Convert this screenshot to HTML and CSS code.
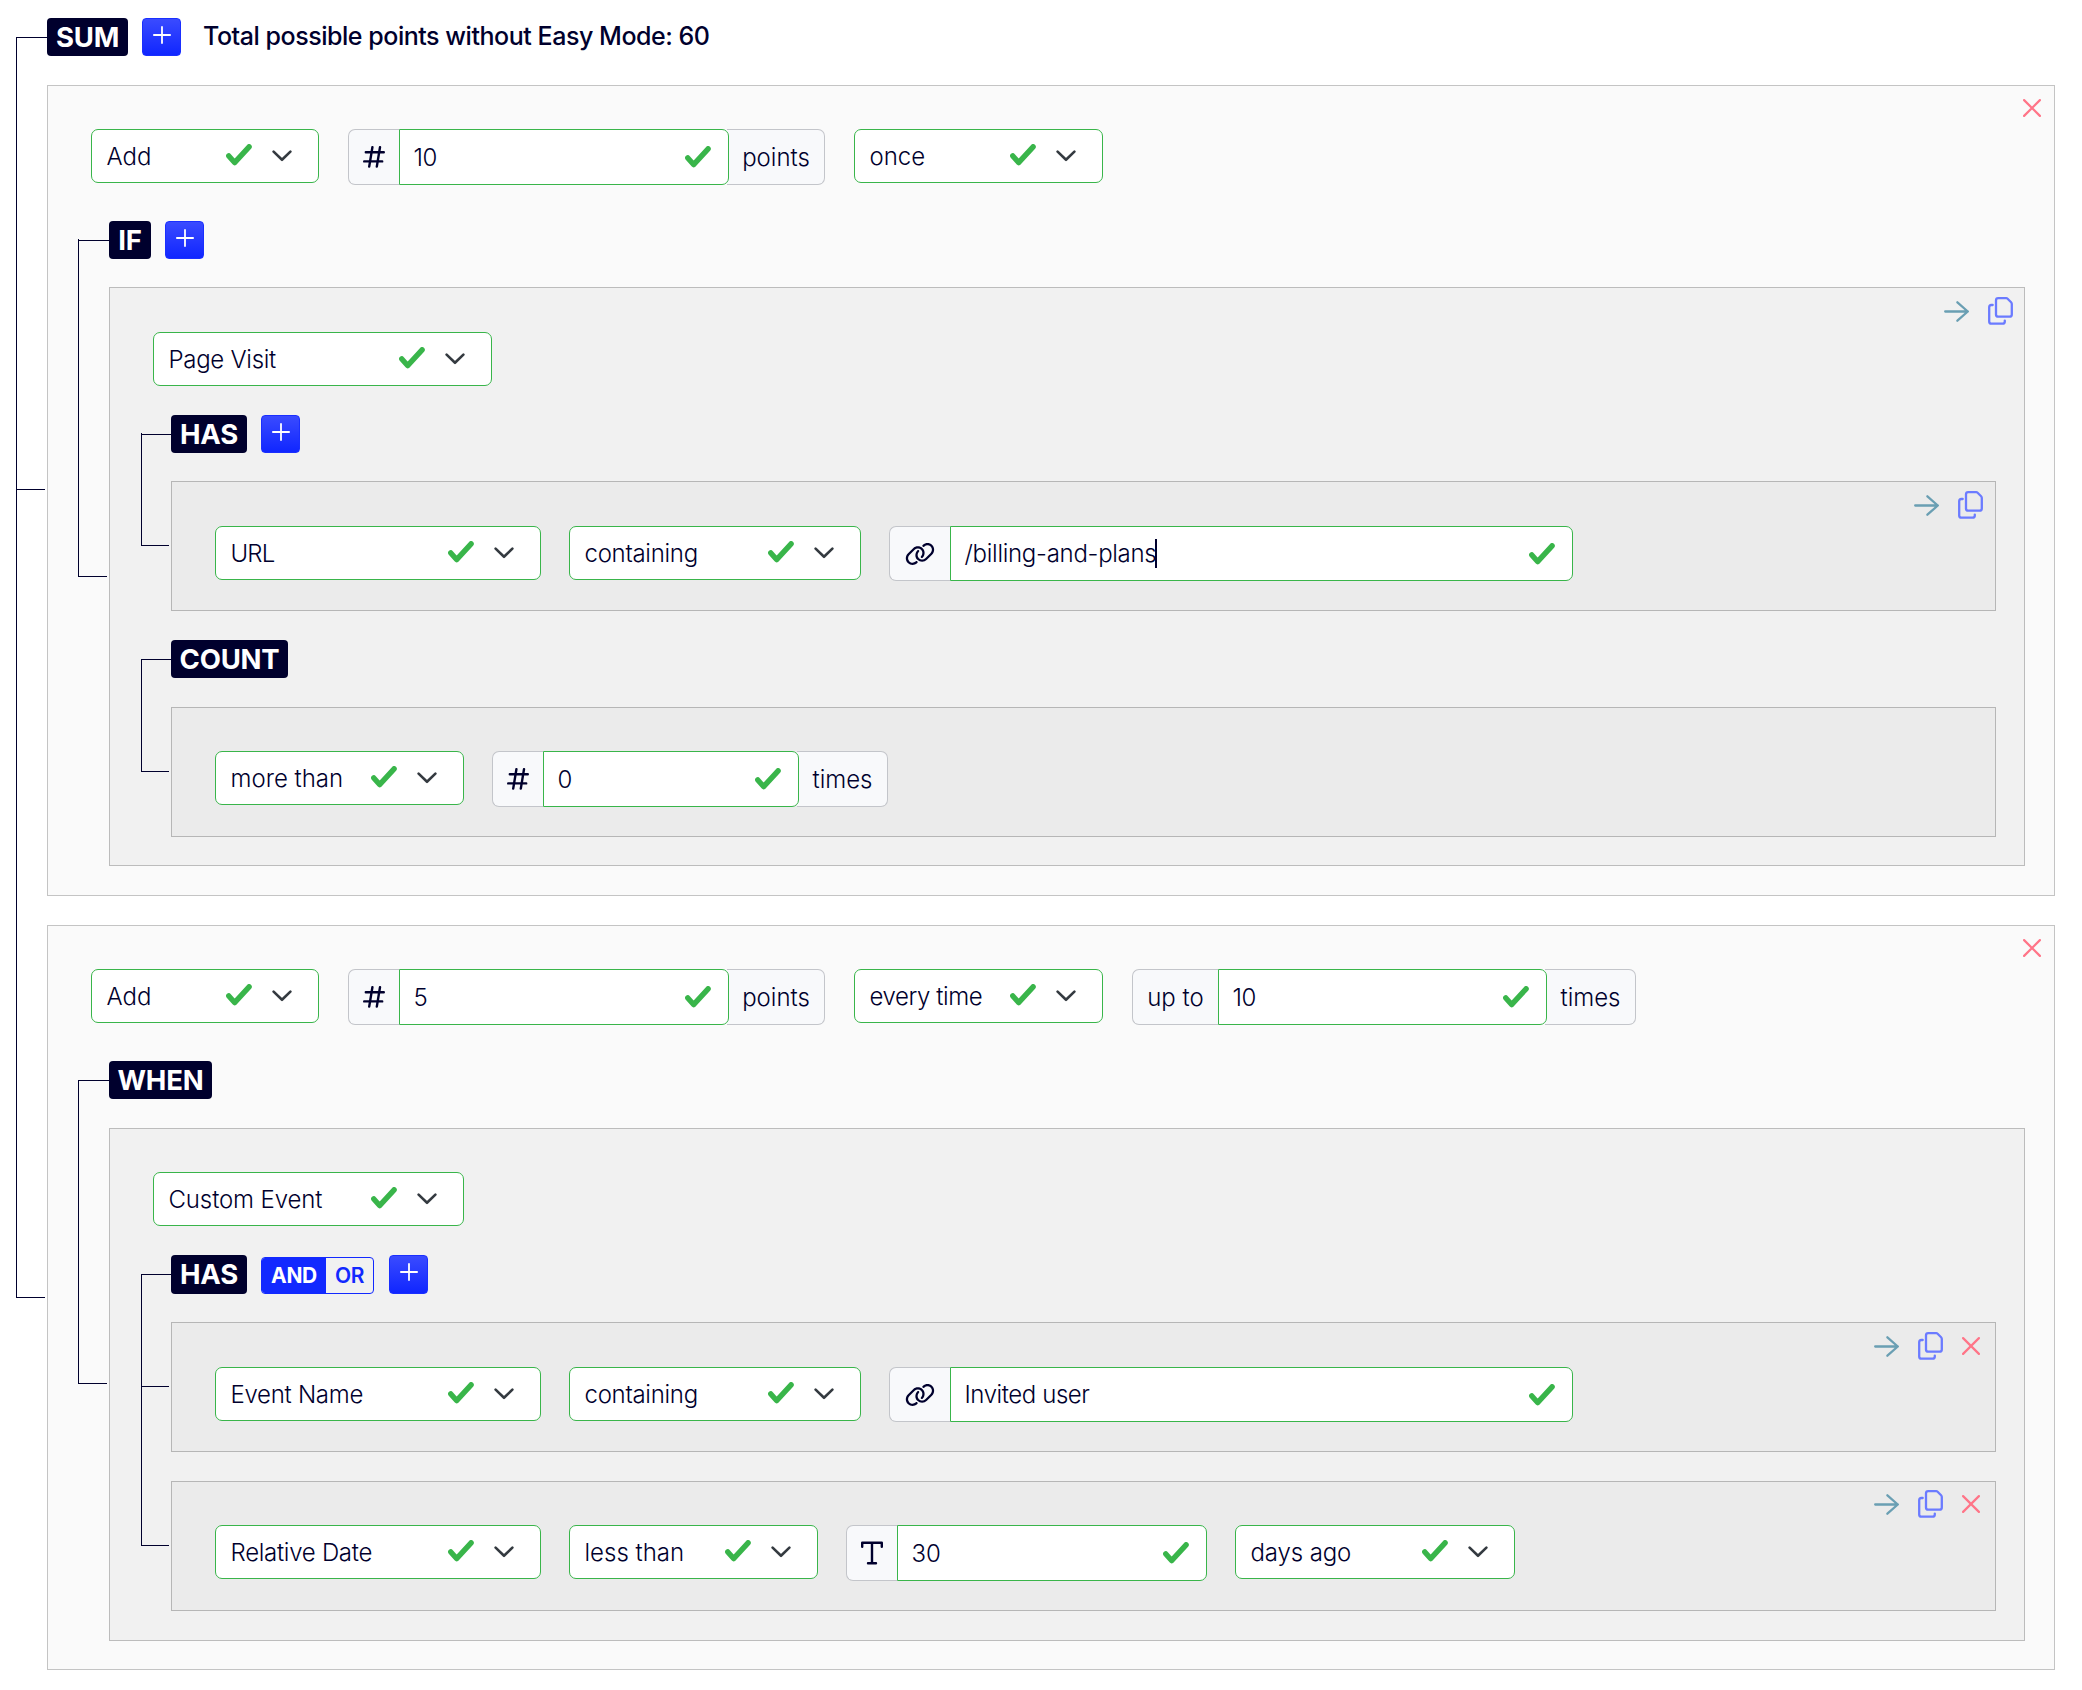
FILE: index.html
```html
<!DOCTYPE html>
<html lang="en">
<head>
<meta charset="utf-8">
<title>Scoring rules</title>
<link rel="stylesheet" href="styles.css">
</head>
<body>
<svg class="defs" aria-hidden="true">
  <symbol id="check" viewBox="0 0 26 22"><path d="M2.8 11.9 8.6 18.6 23.1 2.8" fill="none" stroke="currentColor" stroke-width="5.4" stroke-linecap="round" stroke-linejoin="round"/></symbol>
  <symbol id="chevron" viewBox="0 0 20 12"><path d="M1.6 1.6 10 9.8 18.4 1.6" fill="none" stroke="currentColor" stroke-width="2.6" stroke-linecap="round" stroke-linejoin="round"/></symbol>
  <symbol id="plus" viewBox="0 0 18 18"><path d="M9 .9V17.1M.9 9H17.1" fill="none" stroke="currentColor" stroke-width="1.8" stroke-linecap="round"/></symbol>
  <symbol id="hash" viewBox="0 0 22 22"><path d="M9.4 1.2 6.2 20.6M17 1.2 13.8 20.6M2.8 6.2H20.8M1.2 15.4H19.2" fill="none" stroke="currentColor" stroke-width="2.4" stroke-linecap="round"/></symbol>
  <symbol id="type" viewBox="0 0 22 24"><path d="M1.2 5.8V1.8H20.8V5.8M11 1.8V22.2M7 22.2H15" fill="none" stroke="currentColor" stroke-width="2.4" stroke-linecap="round" stroke-linejoin="round"/></symbol>
  <symbol id="link" viewBox="0 0 640 512"><path fill="currentColor" d="M580.3 267.2c56.2-56.2 56.2-147.3 0-203.5C526.8 10.2 440.9 7.3 383.9 57.2l-6.1 5.4c-10 8.7-11 23.9-2.3 33.9s23.9 11 33.9 2.3l6.1-5.4c38-33.2 95.2-31.3 130.9 4.4c37.4 37.4 37.4 98.1 0 135.6L433.1 346.6c-37.4 37.4-98.2 37.4-135.6 0c-35.7-35.7-37.6-92.9-4.4-130.9l4.7-5.4c8.7-10 7.7-25.1-2.3-33.9s-25.1-7.7-33.9 2.3l-4.7 5.4c-49.8 57-46.9 142.9 6.6 196.4c56.2 56.2 147.3 56.2 203.5 0L580.3 267.2zM59.7 244.8C3.5 301 3.5 392.1 59.7 448.2c53.6 53.6 139.5 56.4 196.5 6.5l6.1-5.4c10-8.7 11-23.9 2.3-33.9s-23.9-11-33.9-2.3l-6.1 5.4c-38 33.2-95.2 31.3-130.9-4.4c-37.4-37.4-37.4-98.1 0-135.6L207 165.4c37.4-37.4 98.1-37.4 135.6 0c35.7 35.7 37.6 92.9 4.4 130.9l-5.4 6.1c-8.7 10-7.7 25.1 2.3 33.9s25.1 7.7 33.9-2.3l5.4-6.1c49.9-57 47-142.9-6.5-196.5c-56.2-56.2-147.3-56.2-203.5 0L59.7 244.8z"/></symbol>
  <symbol id="arrow" viewBox="0 0 25 21"><path d="M1.2 10.5H23.8M13.4 1.3 23.8 10.5 13.4 19.7" fill="none" stroke="currentColor" stroke-width="2.3" stroke-linecap="round" stroke-linejoin="round"/></symbol>
  <symbol id="copy" viewBox="0 0 25 28"><path d="M10.2 1.2H18.2Q19 1.2 19.6 1.8L23.1 5.2Q23.8 5.9 23.8 6.9V17.5Q23.8 19.7 21.6 19.7H10.2Q8 19.7 8 17.5V3.4Q8 1.2 10.2 1.2ZM4.7 8H3.3Q1.2 8 1.2 10.2V24.5Q1.2 26.7 3.3 26.7H14.6Q16.8 26.7 16.8 24.5V23.6" fill="none" stroke="currentColor" stroke-width="2.3" stroke-linecap="round" stroke-linejoin="round"/></symbol>
  <symbol id="cross" viewBox="0 0 18 18"><path d="M1.1 1.1 16.9 16.9M16.9 1.1 1.1 16.9" fill="none" stroke="currentColor" stroke-width="2.2" stroke-linecap="round"/></symbol>
</svg>

<main class="tree">
  <header class="head">
    <span class="badge w-sum">SUM</span>
    <button class="add"><svg><use href="#plus"/></svg></button>
    <h1 class="total">Total possible points without Easy Mode: 60</h1>
  </header>

  <div class="branch">
    <section class="card card-a high-tick">
      <div class="actions actions-root"><svg class="i-cross"><use href="#cross"/></svg></div>
      <div class="row">
        <div class="select w-228"><span>Add</span><svg class="i-check"><use href="#check"/></svg><svg class="i-chev"><use href="#chevron"/></svg></div>
        <div class="group">
          <span class="addon w-51"><svg class="i-hash"><use href="#hash"/></svg></span>
          <div class="input w-330"><span class="snugger">10</span><svg class="i-check"><use href="#check"/></svg></div>
          <span class="addon after w-98"><span>points</span></span>
        </div>
        <div class="select w-249"><span>once</span><svg class="i-check"><use href="#check"/></svg><svg class="i-chev"><use href="#chevron"/></svg></div>
      </div>
      <div class="sub">
        <header class="head">
          <span class="badge w-if">IF</span>
          <button class="add"><svg><use href="#plus"/></svg></button>
        </header>
        <div class="branch tight">
          <section class="card card-b low">
            <div class="actions"><svg class="i-arrow"><use href="#arrow"/></svg><svg class="i-copy"><use href="#copy"/></svg></div>
            <div class="row short">
              <div class="select w-339"><span class="close">Page Visit</span><svg class="i-check"><use href="#check"/></svg><svg class="i-chev"><use href="#chevron"/></svg></div>
            </div>
            <div class="sub">
              <header class="head">
                <span class="badge w-has">HAS</span>
                <button class="add"><svg><use href="#plus"/></svg></button>
              </header>
              <div class="branch tight">
                <section class="card card-c low">
                  <div class="actions"><svg class="i-arrow"><use href="#arrow"/></svg><svg class="i-copy"><use href="#copy"/></svg></div>
                  <div class="row">
                    <div class="select w-326"><span class="closest">URL</span><svg class="i-check"><use href="#check"/></svg><svg class="i-chev"><use href="#chevron"/></svg></div>
                    <div class="select w-292"><span class="close">containing</span><svg class="i-check"><use href="#check"/></svg><svg class="i-chev"><use href="#chevron"/></svg></div>
                    <div class="group slim">
                      <span class="addon w-61"><svg class="i-link"><use href="#link"/></svg></span>
                      <div class="input w-623"><span class="close">/billing-and-plans</span><i class="caret"></i><svg class="i-check"><use href="#check"/></svg></div>
                    </div>
                  </div>
                </section>
              </div>
              <header class="head next">
                <span class="badge w-count">COUNT</span>
              </header>
              <div class="branch">
                <section class="card card-c">
                  <div class="row">
                    <div class="select w-249"><span>more than</span><svg class="i-check"><use href="#check"/></svg><svg class="i-chev"><use href="#chevron"/></svg></div>
                    <div class="group">
                      <span class="addon w-51"><svg class="i-hash"><use href="#hash"/></svg></span>
                      <div class="input w-256"><span>0</span><svg class="i-check"><use href="#check"/></svg></div>
                      <span class="addon after w-91"><span>times</span></span>
                    </div>
                  </div>
                </section>
              </div>
            </div>
          </section>
        </div>
      </div>
    </section>

    <section class="card card-a snug">
      <div class="actions actions-root"><svg class="i-cross"><use href="#cross"/></svg></div>
      <div class="row">
        <div class="select w-228"><span>Add</span><svg class="i-check"><use href="#check"/></svg><svg class="i-chev"><use href="#chevron"/></svg></div>
        <div class="group">
          <span class="addon w-51"><svg class="i-hash"><use href="#hash"/></svg></span>
          <div class="input w-330"><span>5</span><svg class="i-check"><use href="#check"/></svg></div>
          <span class="addon after w-98"><span>points</span></span>
        </div>
        <div class="select w-249"><span class="closer">every time</span><svg class="i-check"><use href="#check"/></svg><svg class="i-chev"><use href="#chevron"/></svg></div>
        <div class="group">
          <span class="addon w-86"><span>up to</span></span>
          <div class="input w-329"><span class="snugger">10</span><svg class="i-check"><use href="#check"/></svg></div>
          <span class="addon after w-91"><span>times</span></span>
        </div>
      </div>
      <div class="sub">
        <header class="head">
          <span class="badge w-when">WHEN</span>
        </header>
        <div class="branch">
          <section class="card card-b roomy high-tick">
            <div class="row short">
              <div class="select w-311"><span class="near">Custom Event</span><svg class="i-check"><use href="#check"/></svg><svg class="i-chev"><use href="#chevron"/></svg></div>
            </div>
            <div class="sub">
              <header class="head tall">
                <span class="badge w-has">HAS</span>
                <span class="toggle"><b class="on">AND</b><b class="off">OR</b></span>
                <button class="add"><svg><use href="#plus"/></svg></button>
              </header>
              <div class="branch tight">
                <section class="card card-c low">
                  <div class="actions with-cross"><svg class="i-arrow"><use href="#arrow"/></svg><svg class="i-copy"><use href="#copy"/></svg><svg class="i-cross"><use href="#cross"/></svg></div>
                  <div class="row">
                    <div class="select w-326"><span class="close">Event Name</span><svg class="i-check"><use href="#check"/></svg><svg class="i-chev"><use href="#chevron"/></svg></div>
                    <div class="select w-292"><span class="close">containing</span><svg class="i-check"><use href="#check"/></svg><svg class="i-chev"><use href="#chevron"/></svg></div>
                    <div class="group slim">
                      <span class="addon w-61"><svg class="i-link"><use href="#link"/></svg></span>
                      <div class="input w-623"><span class="closer">Invited user</span><svg class="i-check"><use href="#check"/></svg></div>
                    </div>
                  </div>
                </section>
                <section class="card card-c">
                  <div class="actions with-cross up"><svg class="i-arrow"><use href="#arrow"/></svg><svg class="i-copy"><use href="#copy"/></svg><svg class="i-cross"><use href="#cross"/></svg></div>
                  <div class="row">
                    <div class="select w-326"><span class="close">Relative Date</span><svg class="i-check"><use href="#check"/></svg><svg class="i-chev"><use href="#chevron"/></svg></div>
                    <div class="select w-249"><span>less than</span><svg class="i-check"><use href="#check"/></svg><svg class="i-chev"><use href="#chevron"/></svg></div>
                    <div class="group">
                      <span class="addon w-51"><svg class="i-type"><use href="#type"/></svg></span>
                      <div class="input w-310"><span>30</span><svg class="i-check"><use href="#check"/></svg></div>
                    </div>
                    <div class="select w-280"><span class="near">days ago</span><svg class="i-check"><use href="#check"/></svg><svg class="i-chev"><use href="#chevron"/></svg></div>
                  </div>
                </section>
              </div>
            </div>
          </section>
        </div>
      </div>
    </section>
  </div>
</main>
</body>
</html>
```
FILE: styles.css
```css
* { box-sizing: border-box; }

body {
  margin: 0;
  background: #fff;
  color: #00002d;
  font-family: Inter, "Liberation Sans", sans-serif;
  font-size: 24px;
  font-weight: 300;
  line-height: 32px;
}

svg { display: block; flex: none; }
.defs { position: absolute; width: 0; height: 0; }

.tree { padding: 18px 27px 0 47px; }

/* Headings of a branch */
.head { display: flex; align-items: flex-end; gap: 14px; height: 38px; }
.head.tall { height: 39px; }
.head.next { margin-top: 29px; }

.badge {
  position: relative;
  display: flex;
  justify-content: center;
  height: 100%;
  border-radius: 4px;
  background: #00002d;
  color: #fff;
  font-size: 27.5px;
  font-weight: 700;
  letter-spacing: -0.2px;
  line-height: 38px;
}
.badge::before {
  content: "";
  position: absolute;
  top: 19px;
  left: -31px;
  width: 31px;
  border-top: 1px solid #00002d;
}
.card-b .badge::before { left: -30px; width: 30px; }

.add {
  display: flex;
  justify-content: center;
  width: 39px;
  height: 100%;
  padding: 7px 0 0;
  border: 1px solid #1a2fff;
  border-radius: 4px;
  background: linear-gradient(#3a4bff, #1026ff);
  color: #fff;
}
.add svg { width: 18px; height: 18px; }
.toggle + .add { margin-left: 1px; }

.total {
  margin: 0 0 0 8px;
  font-size: 25px;
  font-weight: 500;
  letter-spacing: -0.46px;
  line-height: 37px;
  height: 38px;
  white-space: nowrap;
}

.toggle {
  display: flex;
  height: 37px;
  border: 1px solid #1229ff;
  border-radius: 4px;
  overflow: hidden;
  font-size: 21px;
  line-height: 35px;
  text-align: center;
}
.toggle b { font-weight: 700; letter-spacing: -0.3px; }
.toggle .on { width: 64px; background: #1229ff; color: #fff; }
.toggle .off { width: 47px; color: #1229ff; font-weight: 600; }

/* Cards and the lines that join them */
.branch { display: flex; flex-direction: column; gap: 29px; margin-top: 29px; }
.branch.tight { margin-top: 28px; }

.card { position: relative; padding: 43px 29px 29px 43px; border: 1px solid #c0c0c0; }
.card.low { padding-top: 44px; }
.card-a { background: #fafafa; border-color: #c4c4c4; }
.card-a.snug { padding-bottom: 28px; }
.card-b { padding-right: 28px; padding-bottom: 28px; background: #f1f1f1; border-color: #bcbcbc; }
.card-b.roomy { padding-bottom: 29px; }
.card-c { height: 130px; background: #ebebeb; border-color: #b6b6b6; }

.card::before, .card::after { content: ""; position: absolute; left: -32px; border: 0 solid #00002d; }
.card::before { top: calc(50% - 1px); width: 29px; border-top-width: 1px; }
.card.high-tick::before { top: calc(50% - 1.5px); }
.card::after { top: -49px; bottom: 50%; border-left-width: 1px; }
.card:not(:last-child)::after { bottom: -30px; }
.card:not(:first-child)::after { top: -30px; }
.card.roomy::after { bottom: calc(50% + .5px); }
.card-c::before, .card-c::after { left: -31px; }
.card-c::before { width: 28px; }

.sub { margin: 36px 0 0 18px; }
.short + .sub { margin-top: 29px; }

.actions {
  position: absolute;
  top: 9px;
  right: 11px;
  display: flex;
  align-items: center;
  gap: 19px;
  height: 28px;
}
.card-c .actions { right: 12px; }
.card-c .actions.with-cross { right: 15px; }
.actions.up { top: 8px; }
.actions.actions-root { top: 8px; right: 13px; }

.i-arrow { width: 25px; height: 21px; color: #6a9fb3; }
.i-copy { width: 25px; height: 28px; color: #6b7bff; }
.i-cross { width: 18px; height: 18px; color: #ff7588; }

/* Form controls */
.row { display: flex; align-items: flex-start; gap: 29px; height: 56px; }
.row.short { height: 54px; }
.card-c .row { gap: 28px; }

.select, .input, .addon { display: flex; align-items: center; white-space: nowrap; }
.select span, .input span, .addon span { padding-top: 1px; }
.select {
  height: 54px;
  padding: 0 26px 0 14.5px;
  border: 1px solid #39b54a;
  border-radius: 7px;
  background: #fff;
}
.select .i-check { margin: -3px 20px 0 auto; }
.select .i-chev { margin-top: -1px; }

.group { display: flex; height: 56px; }
.group.slim { height: 55px; }
.input {
  position: relative;
  padding: 0 17px 0 13.5px;
  border: 1px solid #39b54a;
  border-radius: 0 7px 7px 0;
  background: #fff;
}
.input .i-check { margin: 0 0 0 auto; }
.addon {
  justify-content: center;
  border: 1px solid #c3c5ca;
  border-right: 0;
  border-radius: 7px 0 0 7px;
  background: #f8f9fb;
}
.addon.after { margin-left: -2px; padding-left: 1px; border: 1px solid #c3c5ca; border-left: 0; border-radius: 0 7px 7px 0; }

.near { letter-spacing: -0.12px; }
.close { letter-spacing: -0.28px; }
.closer { letter-spacing: -0.42px; }
.snugger { letter-spacing: -0.5px; }
.closest { letter-spacing: -0.8px; }

.caret { width: 2px; height: 29px; margin-left: -1px; background: #00002d; }

.i-check { width: 26px; height: 22px; color: #39b54a; }
.i-chev { width: 20px; height: 12px; color: #343a40; }
.i-hash { width: 22px; height: 22px; margin-top: -1px; }
.i-type { width: 22px; height: 24px; }
.i-link { width: 30px; height: 24px; }

/* Control widths */
.w-sum { width: 81px; }
.w-if { width: 42px; }
.w-has { width: 76px; }
.w-count { width: 117px; }
.w-when { width: 103px; }
.w-51 { width: 51px; }
.w-61 { width: 61px; }
.w-86 { width: 86px; }
.w-91 { width: 91px; }
.w-98 { width: 98px; }
.w-228 { width: 228px; }
.w-249 { width: 249px; }
.w-256 { width: 256px; }
.w-280 { width: 280px; }
.w-292 { width: 292px; }
.w-310 { width: 310px; }
.w-311 { width: 311px; }
.w-326 { width: 326px; }
.w-329 { width: 329px; }
.w-330 { width: 330px; }
.w-339 { width: 339px; }
.w-623 { width: 623px; }
```
